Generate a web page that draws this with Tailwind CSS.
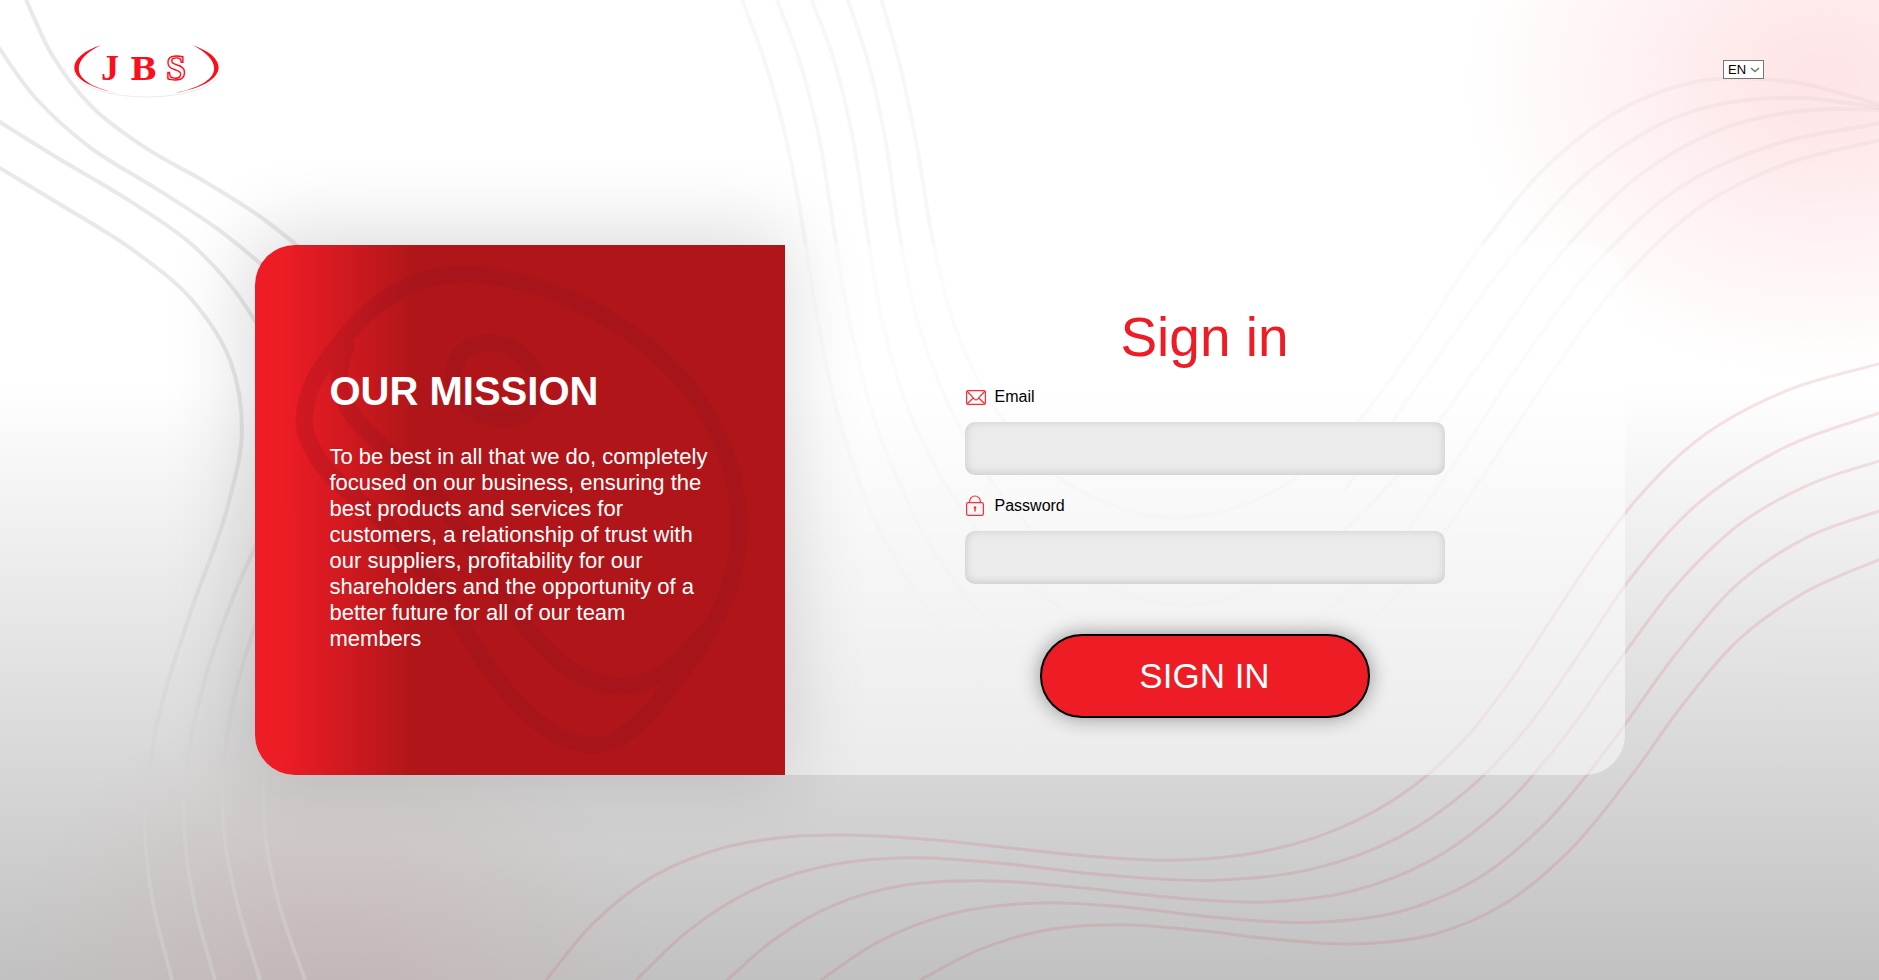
<!DOCTYPE html>
<html lang="en">
<head>
<meta charset="utf-8">
<meta name="viewport" content="width=device-width, initial-scale=1">
<title>JBS - Sign in</title>
<script src="https://cdn.jsdelivr.net/npm/@tailwindcss/browser@4"></script>
</head>
<body class="font-['Liberation_Sans',Arial,sans-serif] text-black">
<div class="relative isolate flex min-h-screen flex-col overflow-hidden bg-[radial-gradient(360px_298px_at_calc(100%_-_56px)_80px,#fee5e7_0%,#fee8ea_20%,#fff4f4_60%,rgba(255,255,255,0)_100%),radial-gradient(330px_310px_at_330px_calc(100%_+_20px),rgba(200,165,165,0.4)_0%,rgba(205,175,175,0.25)_50%,rgba(205,195,195,0)_100%),linear-gradient(to_bottom,#fff_0%,#fff_39%,#c1c1c1_100%)]">
  <svg class="absolute inset-0 -z-10 h-full w-full" viewBox="0 0 1879 980" preserveAspectRatio="none" fill="none" aria-hidden="true">
    <defs>
      <linearGradient id="fade" gradientUnits="userSpaceOnUse" x1="0" y1="0" x2="0" y2="720">
        <stop offset="0" stop-color="#000" stop-opacity=".03"/>
        <stop offset=".6" stop-color="#000" stop-opacity=".03"/>
        <stop offset="1" stop-color="#000" stop-opacity="0"/>
      </linearGradient>
    </defs>
    <g id="grey" stroke="#d3d3d3" stroke-opacity=".5" stroke-width="4"></g>
    <g id="pale" stroke="url(#fade)" stroke-width="4"></g>
    <g id="rose" stroke="#cd4b50" stroke-opacity=".15" stroke-width="3"></g>
  </svg>

  <header class="flex h-[139px] items-center justify-between pr-[115px] pl-[72px]">
    <a href="#" aria-label="JBS" class="block">
      <svg class="h-[60px] w-[150px]" viewBox="0 0 150 60" fill="#fb0f1c">
        <ellipse cx="75" cy="31" rx="74" ry="26" fill="#fff"/>
        <path d="M2 31A73 26 0 0 0 148 31" fill="none" stroke="#ddd" stroke-width=".6"/>
        <path d="M29 5C-8 17-10 43 45 53C-4 43-2 20 29 5Z"/>
        <path d="M120 5C157 17 159 43 103 53C153 43 151 20 120 5Z"/>
        <g font-family="'Liberation Serif','Times New Roman',serif" font-weight="700" font-size="36">
          <text x="29" y="40">J</text>
          <text x="58" y="40" font-family="'DejaVu Serif',serif" font-size="32">B</text>
          <text x="94" y="40" fill="#fff" stroke="#fb0f1c" stroke-width="1.4">S</text>
        </g>
      </svg>
    </a>
    <div class="relative">
      <select aria-label="Language" class="block h-[19px] w-[41px] appearance-none border border-[#767676] bg-white pl-1 text-[13px] leading-4">
        <option>EN</option>
        <option>PT</option>
      </select>
      <svg class="pointer-events-none absolute top-[6px] right-1 h-2 w-[10px]" viewBox="0 0 10 8" fill="none" stroke="#767676" stroke-width="1.6"><path d="M1 2L5 5.5L9 2"/></svg>
    </div>
  </header>

  <main class="flex flex-1 flex-col px-6 pt-[106px] pb-24">
    <div class="mx-auto flex w-full max-w-[1370px]">
      <section class="relative isolate flex min-h-[530px] w-[530px] shrink-0 flex-col justify-center rounded-l-[40px] bg-[linear-gradient(to_right,#ee1c25_0%,#ee1c25_5%,#b01619_30%)] px-[75px] text-white shadow-[-4px_-6px_80px_8px_rgba(0,0,0,0.14)]">
        <svg class="absolute inset-0 -z-10 h-full w-full" viewBox="0 0 530 530" fill="none" aria-hidden="true">
          <g id="steak" stroke="#8c1220" stroke-width="17" opacity=".22"></g>
        </svg>
        <h2 class="mb-[30px] text-[40px] leading-[46px] font-bold">OUR MISSION</h2>
        <p class="text-[22px] leading-[26px]">To be best in all that we do, completely focused on our business, ensuring the best products and services for customers, a relationship of trust with our suppliers, profitability for our shareholders and the opportunity of a better future for all of our team members</p>
      </section>

      <section class="flex flex-1 flex-col justify-center rounded-r-[40px] bg-white/50 pt-1">
        <form class="mx-auto flex w-[480px] flex-col">
          <h1 class="mb-4 text-center text-[55px] leading-[63px] text-[#ee1c25]">Sign in</h1>
          <label for="email" class="mb-[13px] flex h-6 items-center gap-2 text-base">
            <svg class="h-[22px] w-[22px]" viewBox="0 0 22 22" fill="none" stroke="#fb2c36" stroke-width="1.2">
              <rect x="1.6" y="4.6" width="18.8" height="13.8" rx="1.6"/>
              <path d="M2 5L9.4 13.2Q11 14.8 12.6 13.2L20 5M2 18L8.2 12M20 18L13.8 12"/>
            </svg>
            Email
          </label>
          <input id="email" type="email" class="mb-[19px] h-[53px] rounded-[10px] bg-[#ebebeb] px-4 shadow-[inset_0_-1px_8px_rgba(0,0,0,0.16)] outline-none">
          <label for="password" class="mb-[13px] flex h-6 items-center gap-2 text-base">
            <svg class="h-[22px] w-[22px]" viewBox="0 0 22 22" fill="none" stroke="#fb2c36" stroke-width="1.2">
              <rect x="1.6" y="7.6" width="16.8" height="12.8" rx="1.6"/>
              <path d="M4.6 7.6V6.4A5.4 5.4 0 0 1 15.4 6.4V7.6"/>
              <path d="M10 12V16.4" stroke-width="1.4"/>
              <circle cx="10" cy="12.6" r="1" fill="#fb2c36" stroke-width=".6"/>
            </svg>
            Password
          </label>
          <input id="password" type="password" class="mb-[50px] h-[53px] rounded-[10px] bg-[#ebebeb] px-4 shadow-[inset_0_-1px_8px_rgba(0,0,0,0.16)] outline-none">
          <button type="submit" class="mx-auto h-[84px] w-[330px] rounded-full border-2 border-black bg-[#ee1c25] text-[35px] leading-10 text-white shadow-[0_0_20px_rgba(0,0,0,0.4)]">SIGN IN</button>
        </form>
      </section>
    </div>
  </main>
</div>

<script>
// Draws smooth curves through flat lists of x,y pairs; a list that ends where it starts is a closed loop.
const gap = (a, b) => Math.hypot(b[0] - a[0], b[1] - a[1]) || 1;

function neighbours(p, i, closed) {
  const n = p.length;
  if (closed) return [p[(i - 1 + n) % n], p[(i + 1) % n]];
  return [p[i - 1], p[i + 1]];
}
function relax(p, amount, closed) {
  return p.map((b, i) => {
    const [a, c] = neighbours(p, i, closed);
    if (!a || !c) return b;
    const u = gap(a, b), v = gap(b, c);
    return [0, 1].map(k => b[k] + amount * ((a[k] * v + c[k] * u) / (u + v) - b[k]));
  });
}
function spline(n, k, o) {
  let p = [];
  for (let i = 0; i < n.length; i += 2) p.push([n[i] * k + o, n[i + 1] * k + o]);
  const last = p[p.length - 1];
  const closed = last[0] === p[0][0] && last[1] === p[0][1];
  if (closed) p.pop();
  for (let i = 0; i < 4; i++) p = relax(relax(p, 0.5, closed), -0.52, closed);
  const slope = p.map((b, i) => {
    const [a, c] = neighbours(p, i, closed);
    if (!a || !c) {
      const s = a || b, e = c || b, d = gap(s, e);
      return [(e[0] - s[0]) / d, (e[1] - s[1]) / d];
    }
    const u = gap(a, b), v = gap(b, c);
    return [0, 1].map(j => ((b[j] - a[j]) / u * v + (c[j] - b[j]) / v * u) / (u + v));
  });
  let d = 'M' + p[0];
  const count = closed ? p.length : p.length - 1;
  for (let i = 0; i < count; i++) {
    const j = (i + 1) % p.length, b = p[i], c = p[j], t = gap(b, c) / 3;
    d += 'C' + [b[0] + slope[i][0] * t, b[1] + slope[i][1] * t, c[0] - slope[j][0] * t, c[1] - slope[j][1] * t, c[0], c[1]].join(' ');
  }
  return closed ? d + 'Z' : d;
}
function draw(id, curves, k = 1, o = 0) {
  const g = document.getElementById(id);
  for (const n of curves) {
    const el = document.createElementNS('http://www.w3.org/2000/svg', 'path');
    el.setAttribute('d', spline(n, k, o));
    g.appendChild(el);
  }
}
draw('grey', [
  [26,0, 50,56, 90,109, 147,150, 207,181, 260,212, 320,264],
  [-10,35, 33,103, 87,148, 160,189, 220,225, 280,280],
  [-10,116, 53,160, 133,203, 192,242, 235,287, 270,345],
  [-10,162, 57,208, 133,250, 192,298, 232,361, 244,431, 228,506, 188,613, 153,730, 144,825, 152,900, 172,980],
  [290,480, 255,544, 217,640, 190,744, 184,825, 192,900, 215,980],
  [280,560, 253,631, 231,706, 223,781, 225,837, 236,906, 260,980],
  [270,700, 263,775, 265,837, 277,906, 305,980]
]);
draw('pale', [
  [740,-5, 763,50, 785,130, 800,210, 815,300, 836,410, 868,510, 915,595, 980,680],
  [775,-5, 800,55, 819,130, 835,230, 848,310, 885,450, 955,585, 1055,675, 1180,710, 1290,685, 1380,615, 1470,490, 1540,390, 1624,277, 1700,205, 1783,160, 1885,139],
  [810,-5, 835,55, 853,130, 868,235, 882,320, 910,410, 965,510, 1060,610, 1180,660, 1300,630, 1380,560, 1450,465, 1520,364, 1603,254, 1683,184, 1767,142, 1885,122],
  [846,-5, 871,60, 887,140, 901,240, 918,325, 960,430, 1030,525, 1108,588, 1190,610, 1290,575, 1390,485, 1480,364, 1562,247, 1647,167, 1733,124, 1817,108, 1885,110],
  [880,-5, 903,65, 918,145, 933,240, 955,325, 998,410, 1070,490, 1167,522, 1265,498, 1345,435, 1410,350, 1482,245, 1548,163, 1627,105, 1710,79, 1793,79, 1885,106],
  [1345,490, 1430,375, 1515,255, 1595,165, 1683,111, 1787,92, 1885,108]
]);
draw('rose', [
  [546,980, 589,922, 652,875, 723,848, 790,838, 857,836, 930,839, 1013,848, 1095,857, 1170,859, 1250,854, 1335,832, 1410,789, 1465,739, 1510,680, 1550,620, 1590,563, 1638,500, 1700,436, 1780,386, 1885,362],
  [636,980, 685,930, 752,889, 832,864, 915,858, 995,863, 1103,874, 1215,881, 1313,870, 1400,837, 1470,788, 1530,724, 1580,655, 1630,580, 1695,502, 1783,440, 1885,411],
  [727,980, 772,938, 835,903, 907,885, 982,881, 1080,887, 1180,898, 1266,902, 1350,892, 1430,862, 1500,811, 1560,742, 1620,660, 1680,580, 1741,520, 1810,482, 1885,459],
  [821,980, 873,940, 950,912, 1040,903, 1125,907, 1215,917, 1313,923, 1400,912, 1476,881, 1545,825, 1610,745, 1680,650, 1741,577, 1806,533, 1885,509],
  [920,980, 974,948, 1045,929, 1120,925, 1200,930, 1275,939, 1359,944, 1435,935, 1505,905, 1570,851, 1630,778, 1685,702, 1740,636, 1800,590, 1885,557]
]);
// The steak outline lives on its own 1568-unit grid, scaled into the panel.
draw('steak', [
  [172,545, 195,460, 285,325, 385,205, 500,145, 625,125, 790,148, 960,215, 1135,322, 1280,468, 1370,650, 1398,850, 1368,1010, 1300,1140, 1200,1275, 1100,1395, 1045,1432, 985,1443, 900,1422, 800,1350, 700,1235, 600,1075, 500,920, 400,805, 310,735, 220,655, 172,545],
  [300,310, 272,400, 285,475, 350,560, 455,655, 560,748, 640,860, 720,1000, 820,1135, 940,1240, 1070,1284, 1190,1255, 1310,1120],
  [595,390, 625,335, 690,313, 760,332, 815,380, 838,445, 820,510, 750,537, 665,510, 612,455, 595,390]
], 1 / 2.8, -15);
</script>
</body>
</html>
